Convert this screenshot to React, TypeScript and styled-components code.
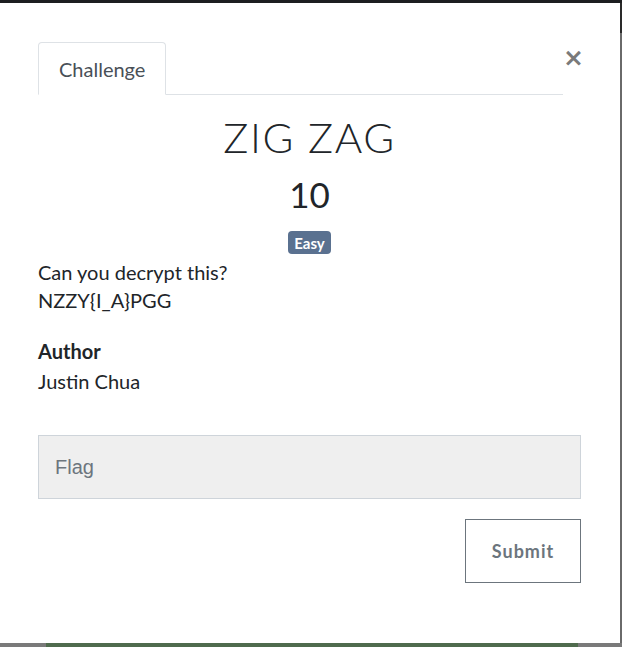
import React from 'react'
import styled, { createGlobalStyle } from 'styled-components'

const GlobalStyle = createGlobalStyle`
  html, body {
    margin: 0;
    padding: 0;
    background: #6e6e6e;
  }
  * { box-sizing: border-box; }
`

const Page = styled.div`
  width: 622px;
  height: 647px;
  display: flex;
  flex-direction: column;
  overflow: hidden;
`

const TopStrip = styled.div`
  height: 3px;
  background: #1d1e20;
`

const Middle = styled.div`
  display: flex;
  height: 640px;
`

const RightShade = styled.div`
  flex: 1;
  background: linear-gradient(#2a2a2a 0 30px, #6a6a6a 30px);
`

const BottomStrip = styled.div`
  height: 4px;
  background: linear-gradient(
    to right,
    #7a7a7a 0 46px,
    #4f6b4d 46px 578px,
    #7a7a7a 578px
  );
`

const Modal = styled.div`
  width: 620px;
  height: 640px;
  flex-shrink: 0;
  background: #fff;
  padding: 39px 39px 0 38px;
  font-family: Lato, 'Open Sans', sans-serif;
  color: #212529;
`

const Header = styled.div`
  display: flex;
  align-items: flex-start;
`

const Tabs = styled.div`
  flex: 1;
  display: flex;
  border-bottom: 1px solid #dee2e6;
`

const Tab = styled.div`
  height: 53px;
  padding: 0 20px;
  margin-bottom: -1px;
  display: flex;
  align-items: center;
  border: 1px solid #dee2e6;
  border-bottom-color: #fff;
  border-radius: 4px 4px 0 0;
  background: #fff;
  font-size: 20px;
  color: #495057;
`

const Close = styled.button`
  width: 18px;
  margin: 3px 0 0 0;
  padding: 0;
  border: 0;
  background: none;
  text-align: center;
  font-family: 'DejaVu Sans', sans-serif;
  font-size: 25px;
  font-weight: 700;
  line-height: 26px;
  color: #7a7a7a;
  cursor: pointer;
`

const Title = styled.h1`
  margin: 18px 0 0;
  text-align: center;
  font-size: 42px;
  font-weight: 300;
  letter-spacing: 1.6px;
  line-height: 48px;
`

const Points = styled.div`
  margin-top: 11px;
  text-align: center;
  font-size: 35px;
  font-weight: 400;
  line-height: 44px;
`

const BadgeRow = styled.div`
  display: flex;
  justify-content: center;
  margin-top: 15px;
`

const Badge = styled.span`
  height: 23px;
  padding: 0 6px;
  display: inline-flex;
  align-items: center;
  border-radius: 4px;
  background: #5a7190;
  color: #fff;
  font-size: 15px;
  font-weight: 700;
`

const Description = styled.div`
  margin-top: 4px;
  font-size: 20px;
  line-height: 28px;
`

const AuthorLabel = styled.div`
  margin-top: 22px;
  font-size: 20px;
  font-weight: 700;
  line-height: 30px;
`

const AuthorName = styled.div`
  font-size: 20px;
  line-height: 30px;
`

const FlagInput = styled.input`
  display: block;
  width: 100%;
  height: 64px;
  margin-top: 39px;
  padding: 0 16px;
  border: 1px solid #ced4da;
  border-radius: 0;
  background: #efefef;
  font-family: 'Liberation Sans', Arial, sans-serif;
  font-size: 20px;
  color: #495057;
  outline: none;
  &::placeholder {
    color: #6c757d;
  }
`

const Actions = styled.div`
  display: flex;
  justify-content: flex-end;
  margin-top: 20px;
`

const SubmitButton = styled.button`
  width: 116px;
  height: 64px;
  border: 1px solid #6c757d;
  border-radius: 0;
  background: #fff;
  font-family: Lato, sans-serif;
  font-size: 18px;
  font-weight: 700;
  letter-spacing: 1px;
  color: #6c757d;
  cursor: pointer;
`

export default function App() {
  return (
    <Page>
      <GlobalStyle />
      <TopStrip />
      <Middle>
        <Modal>
          <Header>
            <Tabs>
              <Tab>Challenge</Tab>
            </Tabs>
            <Close aria-label="Close">×</Close>
          </Header>
          <Title>ZIG ZAG</Title>
          <Points>10</Points>
          <BadgeRow>
            <Badge>Easy</Badge>
          </BadgeRow>
          <Description>
            Can you decrypt this?
            <br />
            NZZY{'{'}I_A{'}'}PGG
          </Description>
          <AuthorLabel>Author</AuthorLabel>
          <AuthorName>Justin Chua</AuthorName>
          <FlagInput placeholder="Flag" />
          <Actions>
            <SubmitButton>Submit</SubmitButton>
          </Actions>
        </Modal>
        <RightShade />
      </Middle>
      <BottomStrip />
    </Page>
  )
}
